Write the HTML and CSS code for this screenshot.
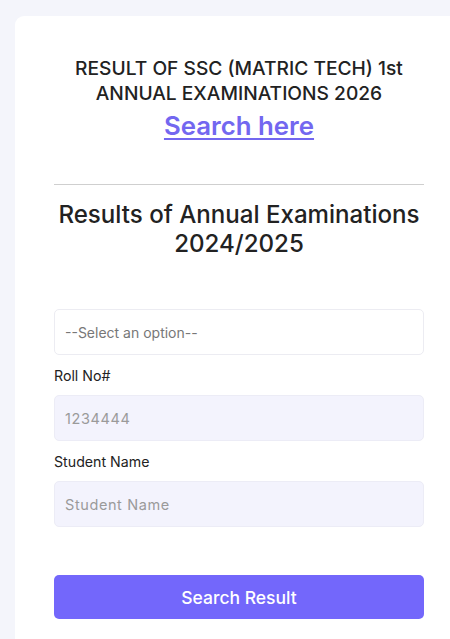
FILE: index.html
```html
<!DOCTYPE html>
<html lang="en">
<head>
<meta charset="utf-8">
<title>Result</title>
<link rel="stylesheet" href="styles.css">
</head>
<body>
<div class="page">
  <div class="card">
    <div class="inner">
      <h3 class="notice">RESULT OF SSC (MATRIC TECH) 1st ANNUAL EXAMINATIONS 2026</h3>
      <a class="search-link" href="#">Search here</a>
      <hr class="divider">
      <h2 class="title">Results of Annual Examinations 2024/2025</h2>
      <form class="form">
        <div class="select-box">--Select an option--</div>
        <label class="label">Roll No#</label>
        <div class="input">1234444</div>
        <label class="label">Student Name</label>
        <div class="input">Student Name</div>
        <button type="button" class="btn">Search Result</button>
      </form>
    </div>
  </div>
</div>
</body>
</html>
```
FILE: styles.css
```css
html, body {
  margin: 0;
  padding: 0;
  overflow: hidden;
  background: #f4f5fb;
  font-family: Inter, "Noto Sans", sans-serif;
  color: #222;
}
.page {
  padding: 16px 0 0 15px;
}
.card {
  background: #fff;
  border-radius: 9px 0 0 0;
  min-height: 640px;
  padding: 40px 0 0 39px;
  box-sizing: border-box;
}
.inner {
  width: 370px;
  text-align: center;
}
.notice {
  margin: 0 -10px;
  font-size: 19.2px;
  line-height: 25px;
  font-weight: 530;
  color: #222;
}
.search-link {
  display: inline-block;
  margin-top: 5px;
  font-size: 25.8px;
  line-height: 30px;
  font-weight: 600;
  color: #7367f0;
  text-decoration: underline;
  text-underline-offset: 3px;
  text-decoration-thickness: 2px;
}
.divider {
  border: 0;
  border-top: 1px solid #cfcfcf;
  margin: 43px 0 0;
}
.title {
  margin: 15px -10px 0;
  font-size: 24.1px;
  line-height: 29px;
  font-weight: 530;
  color: #222;
}
.form {
  margin-top: 51px;
  text-align: left;
  display: flex;
  flex-direction: column;
}
.select-box, .input {
  height: 46px;
  box-sizing: border-box;
  border-radius: 5px;
  padding: 0 10px;
  display: flex;
  align-items: center;
  font-size: 14.5px;
}
.select-box {
  border: 1px solid #ececf2;
  color: #777;
  font-size: 14px;
}
.input {
  background: #f3f3fd;
  border: 1px solid #ececf6;
  color: #9a9a9a;
  letter-spacing: 0.6px;
}
.label {
  font-size: 14.2px;
  line-height: 20px;
  color: #222;
  margin: 11px 0 9px;
}
.btn {
  margin-top: 48px;
  height: 44px;
  border: 0;
  border-radius: 5px;
  background: #7367fb;
  color: #fff;
  font-family: Inter, "Noto Sans", sans-serif;
  font-size: 17.5px;
  font-weight: 500;
  cursor: pointer;
}
```
